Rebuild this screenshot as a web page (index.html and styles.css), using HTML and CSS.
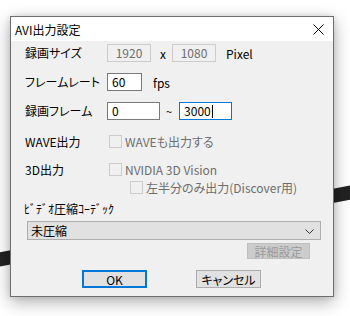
FILE: index.html
```html
<!DOCTYPE html>
<html lang="ja">
<head>
<meta charset="utf-8">
<title>AVI出力設定</title>
<link rel="stylesheet" href="styles.css">
</head>
<body>
<div class="bgline"></div>
<div class="dialog">
  <div class="titlebar">
    <span class="title">AVI出力設定</span>
    <svg class="close" width="11" height="11" viewBox="0 0 11 11"><path d="M0.5 0.5 L10.5 10.5 M10.5 0.5 L0.5 10.5" stroke="#000" stroke-width="1" fill="none"/></svg>
  </div>
  <div class="content">
    <div class="row r1">
      <span class="label">録画サイズ</span>
      <span class="field disabled w44">1920</span>
      <span class="sep-x">x</span>
      <span class="field disabled w44">1080</span>
      <span class="unit">Pixel</span>
    </div>
    <div class="row r2">
      <span class="label">フレームレート</span>
      <span class="field w35">60</span>
      <span class="unit fps">fps</span>
    </div>
    <div class="row r3">
      <span class="label">録画フレーム</span>
      <span class="field w53">0</span>
      <span class="sep-t">~</span>
      <span class="field w53 focus">3000<span class="caret"></span></span>
    </div>
    <div class="row r4">
      <span class="label">WAVE出力</span>
      <span class="check"></span>
      <span class="clabel">WAVEも出力する</span>
    </div>
    <div class="row r5">
      <span class="label">3D出力</span>
      <span class="check"></span>
      <span class="clabel">NVIDIA 3D Vision</span>
    </div>
    <div class="row r6">
      <span class="check"></span>
      <span class="clabel">左半分のみ出力(Discover用)</span>
    </div>
    <div class="codec-label">ﾋﾞﾃﾞｵ圧縮ｺｰﾃﾞｯｸ</div>
    <div class="select">
      <span>未圧縮</span>
      <svg class="chev" width="9" height="5" viewBox="0 0 9 5"><path d="M0.5 0.5 L4.5 4.5 L8.5 0.5" stroke="#333" stroke-width="1" fill="none"/></svg>
    </div>
    <div class="detail-row"><span class="btn detail">詳細設定</span></div>
    <div class="buttons">
      <span class="btn ok">OK</span>
      <span class="btn cancel">キャンセル</span>
    </div>
  </div>
</div>
</body>
</html>
```
FILE: styles.css
```css
html, body {
  margin: 0;
  padding: 0;
}
body {
  width: 350px;
  height: 316px;
  background: #ffffff;
  font-family: "Noto Sans CJK JP", "Noto Sans", sans-serif;
  font-size: 12px;
  font-feature-settings: "palt";
  color: #000;
  position: relative;
  overflow: hidden;
  padding-top: 16px;
  box-sizing: border-box;
  white-space: nowrap;
}
.bgline {
  position: absolute;
  left: -15px;
  top: 219px;
  width: 380px;
  height: 14px;
  background: #222;
  transform: rotate(-10.8deg);
}
.dialog {
  position: relative;
  margin-left: 10px;
  width: 324px;
  height: 281px;
  box-sizing: border-box;
  border: 1px solid #6e6e6e;
  background: #f0f0f0;
  box-shadow: 0 5px 16px rgba(0, 0, 0, 0.32), 0 0 6px rgba(0, 0, 0, 0.1);
}
.titlebar {
  height: 24px;
  background: #fff;
  display: flex;
  align-items: center;
  justify-content: space-between;
  padding: 0 9px 0 4px;
}
.title {
  font-size: 12px;
  line-height: 24px;
  padding-top: 1px;
}
.close {
  display: block;
}
.content {
  height: 255px;
  box-sizing: border-box;
  padding: 3px 0 0 14px;
}
.row {
  display: flex;
  align-items: center;
}
.label {
  width: 82px;
  flex: none;
  line-height: 16px;
  white-space: nowrap;
  overflow: visible;
}
.r1, .r2, .r3 { height: 18px; }
.r2, .r3 { margin-top: 11px; }
.r4 { margin-top: 15px; height: 13px; }
.r5 { margin-top: 15px; height: 13px; }
.r6 { margin-top: 5px; height: 13px; padding-left: 105px; }
.field {
  box-sizing: border-box;
  height: 18px;
  border: 1px solid #7a7a7a;
  background: #fff;
  line-height: 16px;
  padding-left: 4px;
  display: flex;
  align-items: center;
  font-size: 12px;
  flex: none;
}
.field.disabled {
  border-color: #cccccc;
  background: #f0f0f0;
  color: #6d6d6d;
  justify-content: center;
  padding-left: 0;
}
.field.focus { border-color: #0078d7; }
.w44 { width: 44px; }
.w35 { width: 35px; }
.w53 { width: 53px; }
.caret {
  display: inline-block;
  width: 1px;
  height: 13px;
  background: #000;
  margin-left: 1px;
}
.sep-x { margin: 0 6px 0 9px; }
.sep-t { margin: 0 7px 0 6px; font-size: 11px; }
.unit { margin-left: 10px; }
.unit.fps { margin-left: 11px; }
.check {
  box-sizing: border-box;
  width: 13px;
  height: 13px;
  border: 1px solid #cccccc;
  background: #f0f0f0;
  margin-left: 2px;
  flex: none;
}
.r6 .check { margin-left: 0; }
.clabel {
  color: #6d6d6d;
  margin-left: 3px;
  line-height: 13px;
}
.codec-label {
  margin-top: 7px;
  height: 16px;
  line-height: 16px;
  margin-left: -1px;
}
.select {
  margin-top: 4px;
  margin-left: 2px;
  width: 294px;
  height: 19px;
  box-sizing: border-box;
  border: 1px solid #adadad;
  background: #e1e1e1;
  display: flex;
  align-items: center;
  justify-content: space-between;
  padding: 0 6px 0 3px;
}
.chev { display: block; margin-top: 1px; }
.detail-row {
  margin-top: 3px;
  display: flex;
  justify-content: flex-end;
  padding-right: 23px;
}
.btn {
  box-sizing: border-box;
  display: flex;
  align-items: center;
  justify-content: center;
  background: #e1e1e1;
  border: 1px solid #adadad;
}
.detail {
  width: 63px;
  height: 16px;
  background: #cccccc;
  border-color: #bfbfbf;
  color: #9a9a9a;
}
.buttons {
  margin-top: 11px;
  display: flex;
  padding-left: 57px;
  gap: 49px;
}
.ok, .cancel {
  width: 65px;
  height: 18px;
}
.ok { border: 2px solid #0078d7; }
```
